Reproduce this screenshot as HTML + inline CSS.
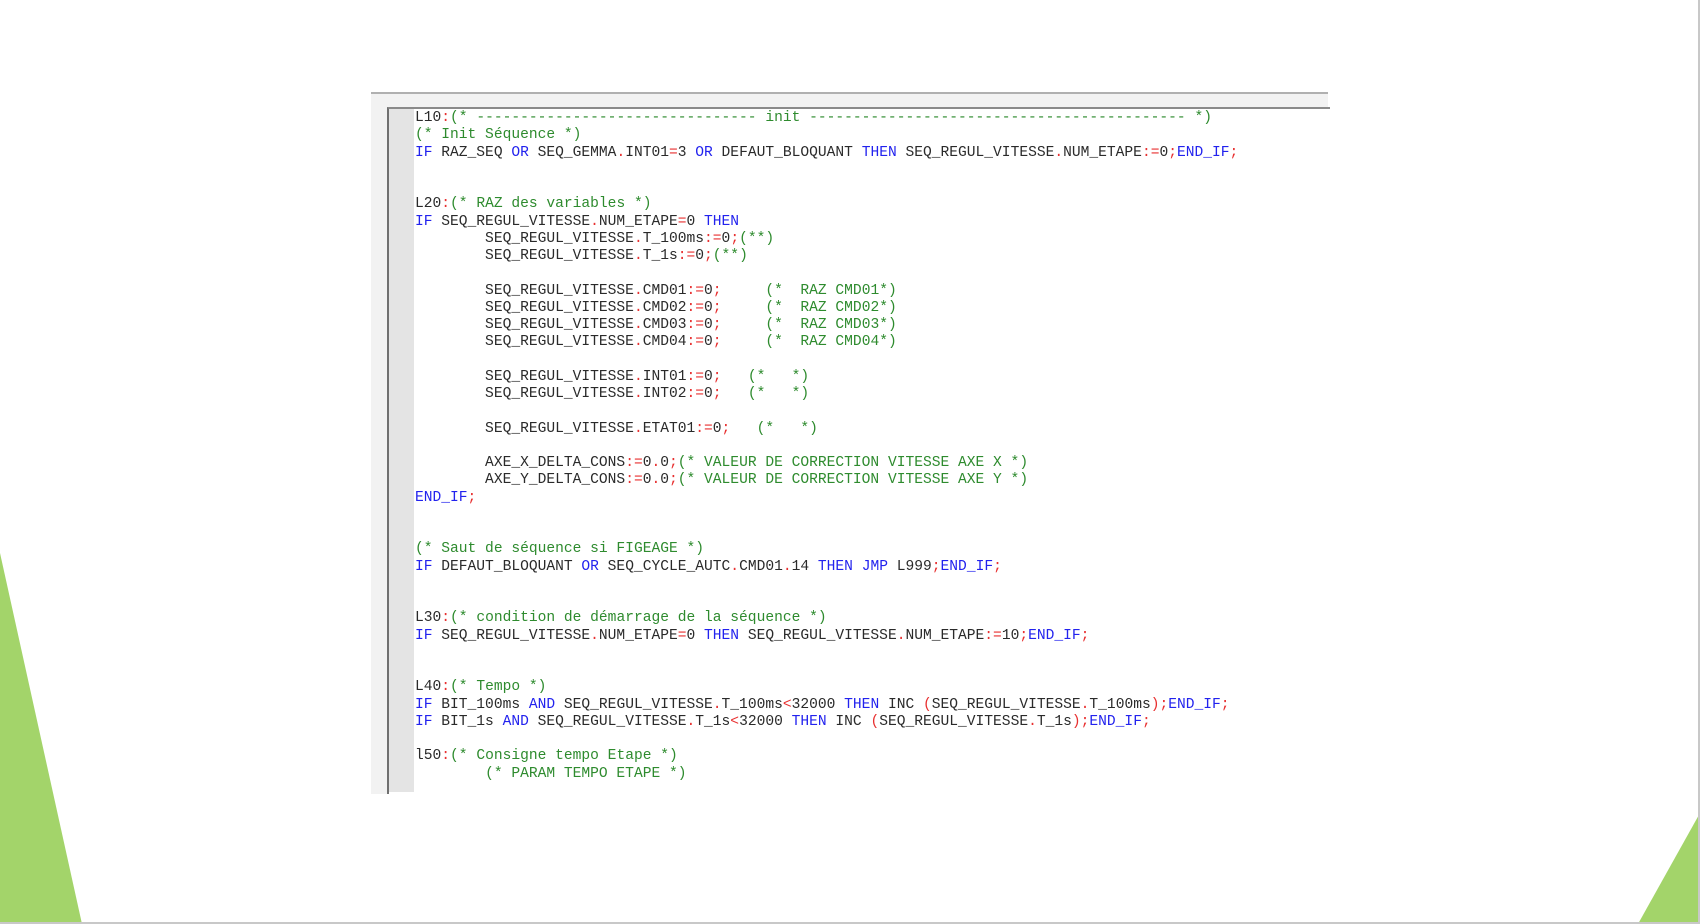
<!DOCTYPE html>
<html><head><meta charset="utf-8">
<style>
html,body{margin:0;padding:0;background:#fff;width:1700px;height:924px;overflow:hidden;position:relative}
.frame{position:absolute;left:371px;top:92px;width:957px;height:700px;background:#f2f2f2;border-top:2px solid #b0b0b0}
.inner{position:absolute;left:387px;top:107px;width:941px;height:685px;background:#fff;border-left:2px solid #707070;border-top:2px solid #8a8a8a}
.gutter{position:absolute;left:389px;top:109px;width:25px;height:683px;background:#e4e4e4}
pre{position:absolute;left:415px;top:110px;margin:0;font-family:"Liberation Mono",monospace;font-size:14.6px;line-height:17.25px;color:#2a2a2a;letter-spacing:0}
.k{color:#2222ee}.o{color:#e83030}.c{color:#2e8b2e}
</style></head><body>
<svg width="1700" height="924" style="position:absolute;left:0;top:0">
<polygon points="0,553 82,924 0,924" fill="#a3d46a"/>
<polygon points="1700,813 1700,924 1638,924" fill="#a3d46a"/>
<rect x="1698" y="0" width="2" height="924" fill="#c8c8c8"/>
<rect x="0" y="922" width="1700" height="2" fill="#c8c8c8"/>
</svg>
<div class="frame"></div>
<div class="inner"></div>
<div class="gutter"></div>
<pre>L10<span class="o">:</span><span class="c">(* -------------------------------- init ------------------------------------------- *)</span>
<span class="c">(* Init Séquence *)</span>
<span class="k">IF</span> RAZ_SEQ <span class="k">OR</span> SEQ_GEMMA<span class="o">.</span>INT01<span class="o">=</span>3 <span class="k">OR</span> DEFAUT_BLOQUANT <span class="k">THEN</span> SEQ_REGUL_VITESSE<span class="o">.</span>NUM_ETAPE<span class="o">:=</span>0<span class="o">;</span><span class="k">END_IF</span><span class="o">;</span>


L20<span class="o">:</span><span class="c">(* RAZ des variables *)</span>
<span class="k">IF</span> SEQ_REGUL_VITESSE<span class="o">.</span>NUM_ETAPE<span class="o">=</span>0 <span class="k">THEN</span>
        SEQ_REGUL_VITESSE<span class="o">.</span>T_100ms<span class="o">:=</span>0<span class="o">;</span><span class="c">(**)</span>
        SEQ_REGUL_VITESSE<span class="o">.</span>T_1s<span class="o">:=</span>0<span class="o">;</span><span class="c">(**)</span>

        SEQ_REGUL_VITESSE<span class="o">.</span>CMD01<span class="o">:=</span>0<span class="o">;</span>     <span class="c">(*  RAZ CMD01*)</span>
        SEQ_REGUL_VITESSE<span class="o">.</span>CMD02<span class="o">:=</span>0<span class="o">;</span>     <span class="c">(*  RAZ CMD02*)</span>
        SEQ_REGUL_VITESSE<span class="o">.</span>CMD03<span class="o">:=</span>0<span class="o">;</span>     <span class="c">(*  RAZ CMD03*)</span>
        SEQ_REGUL_VITESSE<span class="o">.</span>CMD04<span class="o">:=</span>0<span class="o">;</span>     <span class="c">(*  RAZ CMD04*)</span>

        SEQ_REGUL_VITESSE<span class="o">.</span>INT01<span class="o">:=</span>0<span class="o">;</span>   <span class="c">(*   *)</span>
        SEQ_REGUL_VITESSE<span class="o">.</span>INT02<span class="o">:=</span>0<span class="o">;</span>   <span class="c">(*   *)</span>

        SEQ_REGUL_VITESSE<span class="o">.</span>ETAT01<span class="o">:=</span>0<span class="o">;</span>   <span class="c">(*   *)</span>

        AXE_X_DELTA_CONS<span class="o">:=</span>0<span class="o">.</span>0<span class="o">;</span><span class="c">(* VALEUR DE CORRECTION VITESSE AXE X *)</span>
        AXE_Y_DELTA_CONS<span class="o">:=</span>0<span class="o">.</span>0<span class="o">;</span><span class="c">(* VALEUR DE CORRECTION VITESSE AXE Y *)</span>
<span class="k">END_IF</span><span class="o">;</span>


<span class="c">(* Saut de séquence si FIGEAGE *)</span>
<span class="k">IF</span> DEFAUT_BLOQUANT <span class="k">OR</span> SEQ_CYCLE_AUTC<span class="o">.</span>CMD01<span class="o">.</span>14 <span class="k">THEN</span> <span class="k">JMP</span> L999<span class="o">;</span><span class="k">END_IF</span><span class="o">;</span>


L30<span class="o">:</span><span class="c">(* condition de démarrage de la séquence *)</span>
<span class="k">IF</span> SEQ_REGUL_VITESSE<span class="o">.</span>NUM_ETAPE<span class="o">=</span>0 <span class="k">THEN</span> SEQ_REGUL_VITESSE<span class="o">.</span>NUM_ETAPE<span class="o">:=</span>10<span class="o">;</span><span class="k">END_IF</span><span class="o">;</span>


L40<span class="o">:</span><span class="c">(* Tempo *)</span>
<span class="k">IF</span> BIT_100ms <span class="k">AND</span> SEQ_REGUL_VITESSE<span class="o">.</span>T_100ms<span class="o">&lt;</span>32000 <span class="k">THEN</span> INC <span class="o">(</span>SEQ_REGUL_VITESSE<span class="o">.</span>T_100ms<span class="o">);</span><span class="k">END_IF</span><span class="o">;</span>
<span class="k">IF</span> BIT_1s <span class="k">AND</span> SEQ_REGUL_VITESSE<span class="o">.</span>T_1s<span class="o">&lt;</span>32000 <span class="k">THEN</span> INC <span class="o">(</span>SEQ_REGUL_VITESSE<span class="o">.</span>T_1s<span class="o">);</span><span class="k">END_IF</span><span class="o">;</span>

l50<span class="o">:</span><span class="c">(* Consigne tempo Etape *)</span>
        <span class="c">(* PARAM TEMPO ETAPE *)</span>
</pre>
</body></html>
